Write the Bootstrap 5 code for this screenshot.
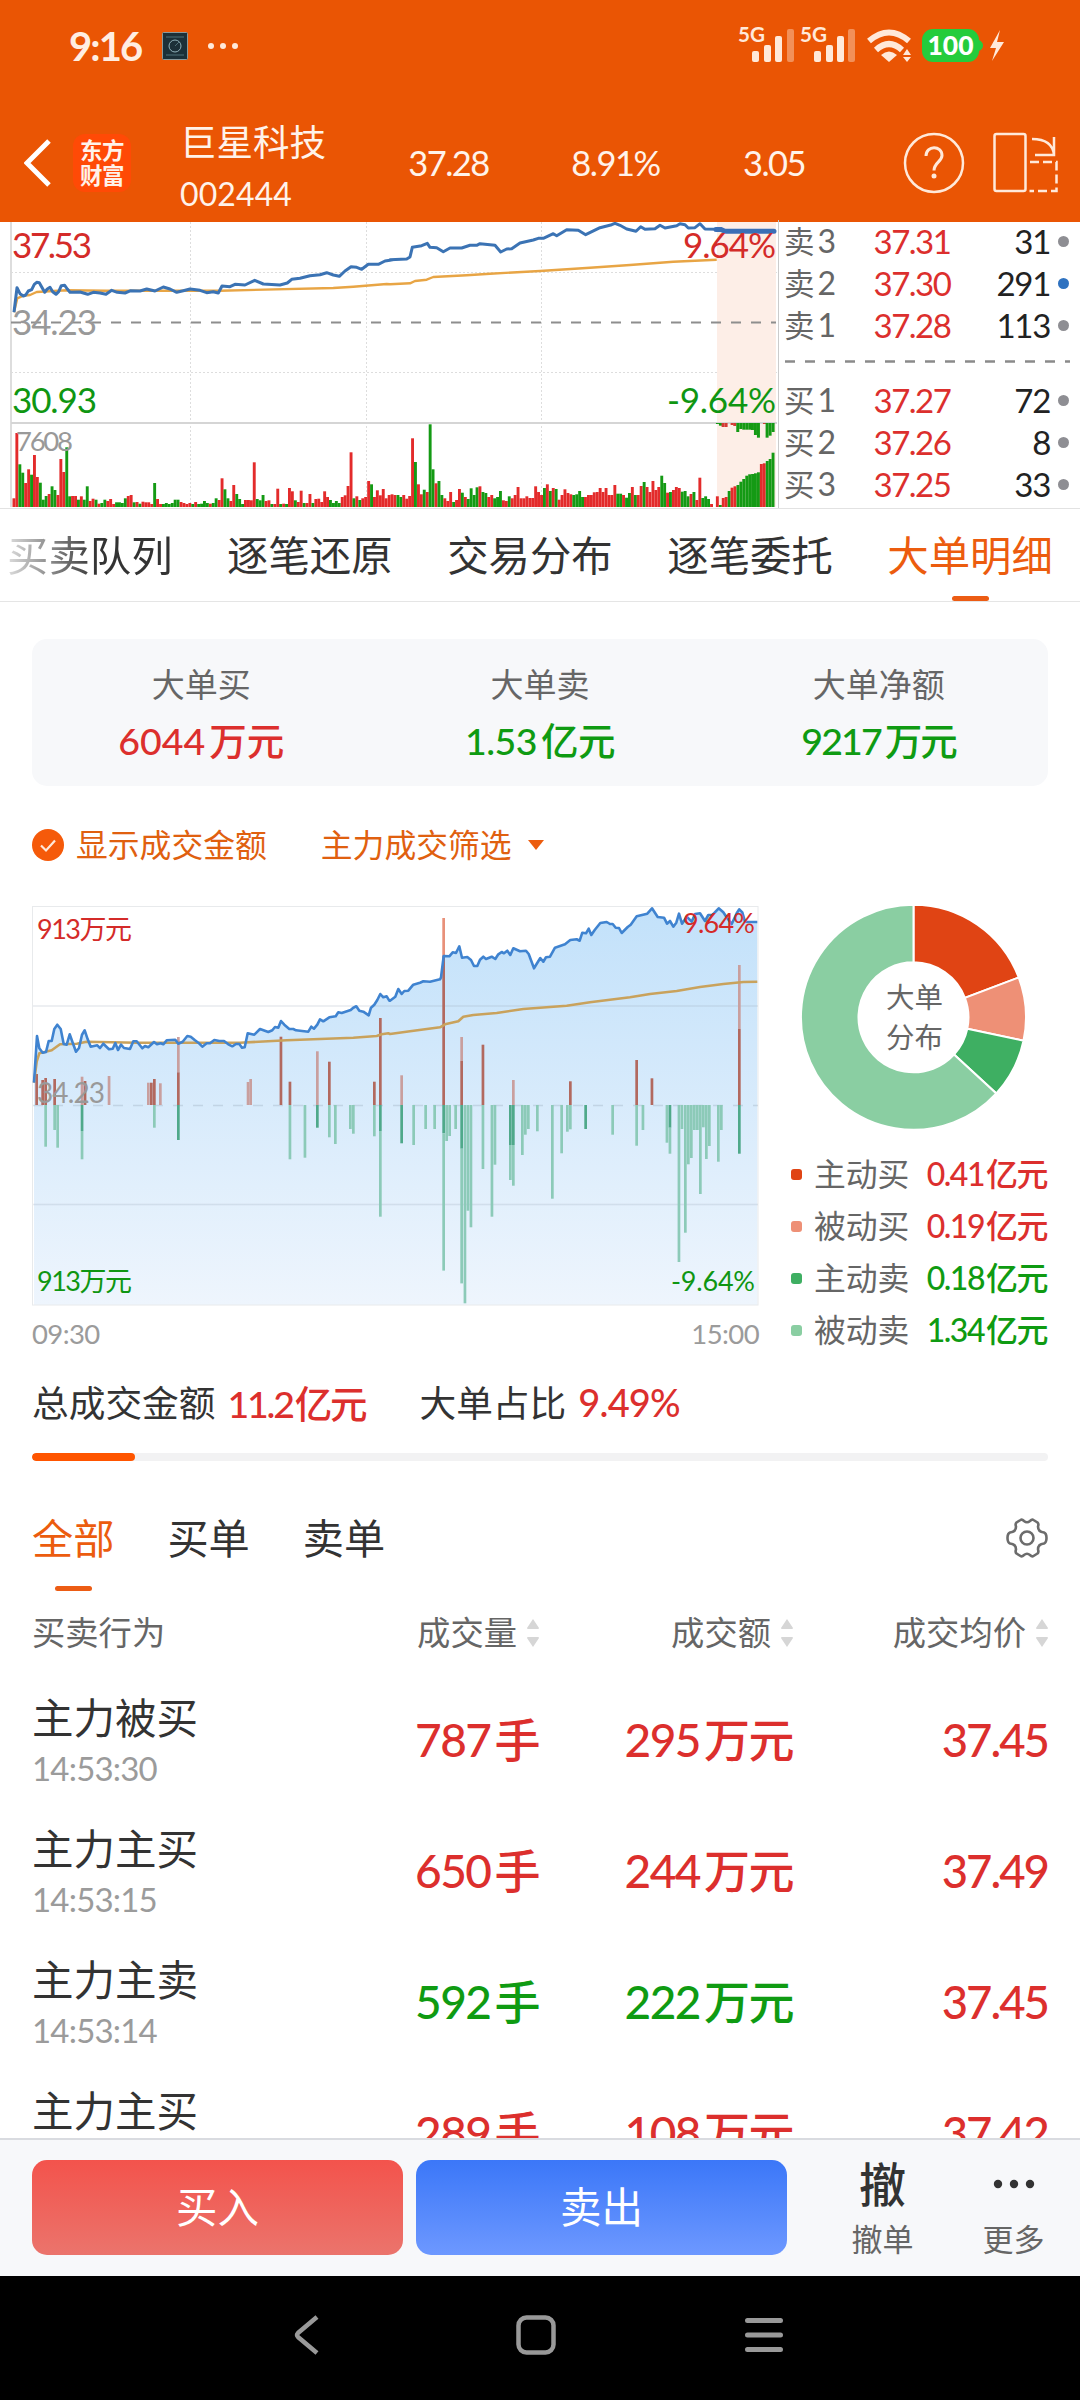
<!DOCTYPE html>
<html lang="zh-CN">
<head>
<meta charset="utf-8">
<meta name="viewport" content="width=device-width, initial-scale=1">
<title>巨星科技 002444</title>
<link href="https://cdn.jsdelivr.net/npm/bootstrap@5.3.0/dist/css/bootstrap.min.css" rel="stylesheet">
<style>
  :root { --brand:#ea5504; --up:#dc2f2d; --down:#0f9b12; --ink:#333; --mid:#666; --soft:#9b9b9b; }
  body { font-family: Lato, "Noto Sans CJK SC", sans-serif; color: var(--ink); background:#fff; line-height:1.2; }
  .phone { width:1080px; height:2400px; overflow:hidden; }
  .up { color:var(--up)!important; } .down { color:var(--down)!important; } .brand { color:#ec5c0e!important; }
  svg { display:block; flex:none; }
  svg text { font-family: Lato, "Noto Sans CJK SC", sans-serif; }

  .head { background:var(--brand); color:#fff3ea; }
  .statusbar { height:92px; padding:0 73px 0 69px; }
  .clock { font-size:40px; font-weight:700; letter-spacing:-1.9px; width:74px; color:#ffeee2; }
  .titlebar { height:130px; padding:12px 21px 0 24px; }
  .logo { width:58px; height:58px; border-radius:12px; background:#ff4a06; font-size:22.5px; line-height:25px; font-weight:700; margin-left:22px; padding-bottom:1px; letter-spacing:-.6px; }
  .stock { margin-left:49px; width:184px; line-height:51px; padding-top:9px; }
  .stock-name { font-size:36.5px; } .stock-code { font-size:32px; letter-spacing:.1px; }
  .quote-cell { width:167px; text-align:center; font-size:34.5px; letter-spacing:-1.5px; padding-left:2px; }

  .quote { height:287px; border-bottom:1px solid #e2e2e2; }
  .book { width:302px; margin-top:-2px; font-size:33px; color:#222; padding:0 11px 0 5px; border-left:1px solid #ccc; }
  .book-row { height:42px; line-height:42px; }
  .book-label { width:66px; color:var(--mid); font-size:30.5px; }
  .book-label b { font-weight:400; font-size:32px; margin-left:3px; }
  .book-price { width:101px; text-align:right; letter-spacing:-1.5px; }
  .book-qty { width:100px; text-align:right; letter-spacing:-1.3px; margin-right:1px; }
  .dot { width:11px; height:11px; border-radius:50%; background:#8e8e93; margin-left:7px; }
  .dot.on { background:#2f72c0; }

  .maintabs { height:93px; padding-left:7px; gap:54.500px; font-size:41.4px; border-bottom:1px solid #e5e5e5; white-space:nowrap; line-height:92px; }
  .fade-start { background:linear-gradient(90deg,#ddd 0,#333 90px); -webkit-background-clip:text; background-clip:text; color:transparent; }
  .bar-under { position:absolute; left:50%; width:37px; height:5px; margin-left:-18px; border-radius:3px; background:#ec5c14; }

  .summary { margin:37px 32px 0; height:147px; border-radius:15px; background:#f7f8fa; padding-top:17px; }
  .sum-label { font-size:33px; color:var(--mid); line-height:57px; }
  .sum-value { font-size:37.5px; font-weight:500; line-height:55px; }
  .unit { font-style:normal; margin-left:4px; }
  .filters { height:118px; padding:0 32px; font-size:31.8px; color:#e0600f; }

  .detail { height:456px; padding-left:32px; }
  .times { width:727px; font-size:27.5px; color:var(--soft); line-height:52px; letter-spacing:-.6px; }
  .donut-box { margin-top:-2px; }
  .legend-row { height:52px; font-size:31.8px; padding-right:33px; padding-left:12px; }
  .legend-key { width:11px; height:11px; border-radius:3px; margin-right:12px; }
  .legend-val { font-size:32px; font-weight:500; letter-spacing:-1.5px; }
  .legend-val .unit { margin-left:2px; }
  .totals { height:86px; padding:0 32px; font-size:36.7px; white-space:nowrap; }
  .totals .val { font-size:38px; font-weight:500; letter-spacing:-.8px; }
  .totals .val.amount { width:136px; font-size:37.5px; letter-spacing:-2.200px; }
  .totals .amount .unit { margin-left:2px; }
  .ratio { width:1016px; height:8px; margin:7px 32px 0; border-radius:4px; background:#f2f2f3; }
  .ratio .progress-bar { background:#ff5500; border-radius:4px; }

  .subtabs { margin-top:39px; height:100px; padding:0 32px; font-size:41.2px; line-height:76px; }
  .subtabs .tabs-in { gap:53px; }
  .cols-head { height:66px; padding:0 32px; color:var(--mid); font-size:33.3px; }
  .c1 { width:290px; } .c2 { width:217px; } .c3 { width:254px; } .c4 { width:255px; }
  .deal { height:131px; padding:0 32px; }
  .deal-name { font-size:41.5px; line-height:54px; } 
  .deal-time { font-size:33px; color:var(--soft); line-height:46px; letter-spacing:-.8px; }
  .deal-val { font-size:46px; font-weight:500; letter-spacing:-1.5px; text-align:right; padding-bottom:1px; }
  .c4.deal-val { font-size:45.5px; letter-spacing:-2px; }

  .actions { height:138px; background:#f7f8fa; border-top:2px solid #d9dbe0; padding:20px 0 0 32px; position:relative; z-index:2; }
  .trade { width:371px; flex:none; height:95px; border-radius:15px; border:0; font-size:41.5px; color:#fff; }
  .trade:hover { color:#fff; }
  .buy { background:linear-gradient(#f3534c,#eb746c); }
  .sell { background:linear-gradient(#3b77f8,#6d98ff); margin-left:13px; }
  .act { width:131px; flex:none; font-size:31px; color:var(--mid); }
  .act-top { height:48px; line-height:48px; font-size:47px; font-weight:500; color:#333; }
  .sysnav { height:124px; background:#000; padding:0 297px 7px 293px; }
</style>
</head>
<body>
<div class="phone d-flex flex-column">
  <header class="head flex-shrink-0">
    <div class="statusbar d-flex align-items-center">
      <span class="clock">9:16</span>
      <svg width="26" height="28" viewBox="0 0 26 28" style="margin-left:19px"><rect x=".5" y=".5" width="25" height="27" rx="1" fill="#1c3038" stroke="#8a9a9c"/><circle cx="13" cy="14" r="6" fill="none" stroke="#8fb0b8"/><path d="M13 14l4-4M4 5h18M4 23h18" stroke="#4f7078"/></svg>
      <svg width="32" height="8" viewBox="0 0 32 8" style="margin-left:19px"><g fill="#ffe9da"><circle cx="4" cy="4" r="3"/><circle cx="16" cy="4" r="3"/><circle cx="28" cy="4" r="3"/></g></svg>
      <svg class="ms-auto" width="288" height="60" viewBox="720 16 288 60">
        <g fill="#ffe9da"><text x="739" y="42" font-size="20" font-weight="700" textLength="27" lengthAdjust="spacingAndGlyphs">5G</text><text x="801" y="42" font-size="20" font-weight="700" textLength="27" lengthAdjust="spacingAndGlyphs">5G</text>
        <rect x="753" y="51" width="7" height="11" rx="2"/><rect x="765" y="45" width="7" height="17" rx="2"/><rect x="776" y="36" width="7" height="26" rx="2"/><rect x="788" y="29" width="7" height="33" rx="2" opacity=".4"/>
        <rect x="815" y="51" width="7" height="11" rx="2"/><rect x="827" y="45" width="7" height="17" rx="2"/><rect x="838" y="36" width="7" height="26" rx="2"/><rect x="849" y="29" width="7" height="33" rx="2" opacity=".4"/>
        <path d="M882 55Q890 48 898 55L890 62z"/><path d="M904 55l4-6 4 6zM904 57h8l-4 5z"/>
        <path d="M1001 30l-10 18h6l-4 13 12-19h-7z"/></g>
        <g fill="none" stroke="#ffe9da" stroke-width="6"><path d="M870 41Q890 24 910 41"/><path d="M877 50Q890 38 903 50"/></g>
        <rect x="923" y="29" width="57" height="33" rx="11" fill="#24cc3c"/><path d="M980 40q4 2 4 5.500t-4 5.500z" fill="#24cc3c"/>
        <text x="951.500" y="55" text-anchor="middle" font-size="27" font-weight="900" fill="#fff" textLength="46" lengthAdjust="spacingAndGlyphs">100</text>
      </svg>
    </div>
    <div class="titlebar d-flex align-items-center">
      <svg width="27" height="48" viewBox="0 0 27 48"><path d="M25 2L3 24l22 22" fill="none" stroke="#fff" stroke-width="5"/></svg>
      <div class="logo d-flex align-items-center justify-content-center text-center"><span>东方<br>财富</span></div>
      <div class="stock"><div class="stock-name">巨星科技</div><div class="stock-code">002444</div></div>
      <div class="quote-cell">37.28</div><div class="quote-cell">8.91%</div><div class="quote-cell" style="width:150px">3.05</div>
      <svg class="ms-auto" width="156" height="62" viewBox="903 132 156 62"><g fill="none" stroke="#ffe9da" stroke-width="2.500"><circle cx="934" cy="163" r="29"/><path d="M926 156c0-11 16-11 16-.500 0 6-8 7-8 15" stroke-width="3"/><rect x="994.500" y="134" width="31" height="57" rx="2"/><path d="M1030 162h26.500v29h-27" stroke-dasharray="9 4"/><path d="M1032 139c14 0 21 6 22 16M1054 137v18h-19" /></g><circle cx="934" cy="176" r="2.500" fill="#ffe9da"/></svg>
    </div>
  </header>

  <section class="quote d-flex flex-shrink-0">
    <svg id="minute" width="778" height="286" viewBox="0 222 778 286"></svg>
    <div class="book">
      <div class="book-row d-flex align-items-center"><span class="book-label">卖<b>3</b></span><span class="book-price up">37.31</span><span class="book-qty">31</span><i class="dot"></i></div>
      <div class="book-row d-flex align-items-center"><span class="book-label">卖<b>2</b></span><span class="book-price up">37.30</span><span class="book-qty">291</span><i class="dot on"></i></div>
      <div class="book-row d-flex align-items-center"><span class="book-label">卖<b>1</b></span><span class="book-price up">37.28</span><span class="book-qty">113</span><i class="dot"></i></div>
      <svg width="286" height="33" viewBox="0 0 286 33"><path d="M1 15.500H286" stroke="#8a8a8a" stroke-width="2.500" stroke-dasharray="10 10"/></svg>
      <div class="book-row d-flex align-items-center"><span class="book-label">买<b>1</b></span><span class="book-price up">37.27</span><span class="book-qty">72</span><i class="dot"></i></div>
      <div class="book-row d-flex align-items-center"><span class="book-label">买<b>2</b></span><span class="book-price up">37.26</span><span class="book-qty">8</span><i class="dot"></i></div>
      <div class="book-row d-flex align-items-center"><span class="book-label">买<b>3</b></span><span class="book-price up">37.25</span><span class="book-qty">33</span><i class="dot"></i></div>
    </div>
  </section>

  <nav class="maintabs d-flex flex-shrink-0">
    <span class="fade-start">买卖队列</span><span>逐笔还原</span><span>交易分布</span><span>逐笔委托</span>
    <span class="brand position-relative">大单明细<i class="bar-under bottom-0"></i></span>
  </nav>

  <main class="flex-grow-1 overflow-hidden">
    <div class="summary d-flex text-center">
      <div class="col-4"><div class="sum-label">大单买</div><div class="sum-value up">6044<i class="unit">万元</i></div></div>
      <div class="col-4"><div class="sum-label">大单卖</div><div class="sum-value down" style="letter-spacing:-.5px">1.53<i class="unit">亿元</i></div></div>
      <div class="col-4"><div class="sum-label">大单净额</div><div class="sum-value down" style="letter-spacing:-1.9px">9217<i class="unit">万元</i></div></div>
    </div>
    <div class="filters d-flex align-items-center">
      <svg width="32" height="32" viewBox="0 0 32 32"><circle cx="16" cy="16" r="16" fill="#f55a0a"/><path d="M9 16.500l5 5 9-10" fill="none" stroke="#ffe9da" stroke-width="2.200"/></svg>
      <span style="margin-left:12px">显示成交金额</span><span style="margin-left:54px">主力成交筛选</span>
      <svg width="16" height="12" viewBox="0 0 16 12" style="margin-left:16px"><path d="M0 1h16L8 11z" fill="#ec5c0e"/></svg>
    </div>

    <div class="detail d-flex">
      <div>
        <svg id="flow" width="727" height="404" viewBox="32 904 727 404"></svg>
        <div class="times d-flex justify-content-between"><span>09:30</span><span>15:00</span></div>
      </div>
      <div class="flex-grow-1 ps-3 ms-1 donut-box">
        <svg width="270" height="246" viewBox="779 902 270 246">
          <g id="donut" stroke="#fff" stroke-width="2"></g>
          <g font-size="28.500" fill="#666" text-anchor="middle"><text x="914.500" y="1007.500">大单</text><text x="914.500" y="1047.500">分布</text></g>
        </svg>
        <div class="legend-row d-flex align-items-center"><i class="legend-key" style="background:#e04414"></i><span style="color:#666">主动买</span><span class="legend-val up ms-auto">0.41<i class="unit">亿元</i></span></div>
        <div class="legend-row d-flex align-items-center"><i class="legend-key" style="background:#ee9076"></i><span style="color:#666">被动买</span><span class="legend-val up ms-auto">0.19<i class="unit">亿元</i></span></div>
        <div class="legend-row d-flex align-items-center"><i class="legend-key" style="background:#3eaf62"></i><span style="color:#666">主动卖</span><span class="legend-val down ms-auto">0.18<i class="unit">亿元</i></span></div>
        <div class="legend-row d-flex align-items-center"><i class="legend-key" style="background:#8acea2"></i><span style="color:#666">被动卖</span><span class="legend-val down ms-auto">1.34<i class="unit">亿元</i></span></div>
      </div>
    </div>

    <div class="totals d-flex align-items-center"><span>总成交金额</span><span class="val up amount" style="margin-left:12px">11.2<i class="unit">亿元</i></span><span style="margin-left:56px">大单占比</span><span class="val up" style="margin-left:12px">9.49%</span></div>
    <div class="progress ratio"><div class="progress-bar" style="width:10.15%"></div></div>

    <div class="subtabs d-flex justify-content-between">
      <div class="tabs-in d-flex"><span class="brand position-relative">全部<i class="bar-under" style="top:86px"></i></span><span>买单</span><span>卖单</span></div>
      <svg width="42" height="40" viewBox="0 0 42 40" style="margin-top:18px"><g fill="none" stroke="#6c6c6c" stroke-width="2.600" stroke-linejoin="round"><path d="M14.500 2Q16 1 18 3Q21 5.500 24 3Q26 1 27.500 2L31.500 4.500Q33 6 32 8.500Q32 14 38 14.500Q40.500 15.500 40.500 20T38 25.500Q32 26 32 31.500Q33 34 31.500 35.500L27.500 38Q26 39 24 37Q21 34.500 18 37Q16 39 14.500 38L10.500 35.500Q9 34 10 31.500Q10 26 4 25.500Q1.500 24.500 1.500 20T4 14.500Q10 14 10 8.500Q9 6 10.500 4.500z"/><circle cx="21" cy="20" r="6.500"/></g></svg>
    </div>

    <div class="cols-head d-flex align-items-center">
      <span class="c1">买卖行为</span>
      <span class="c2 d-flex align-items-center justify-content-end">成交量<svg class="sorter"></svg></span>
      <span class="c3 d-flex align-items-center justify-content-end">成交额<svg class="sorter"></svg></span>
      <span class="c4 d-flex align-items-center justify-content-end">成交均价<svg class="sorter"></svg></span>
    </div>

    <div style="padding-top:9px">
      <div class="deal d-flex align-items-center"><div class="c1"><div class="deal-name">主力被买</div><div class="deal-time">14:53:30</div></div><div class="c2 deal-val up">787<i class="unit">手</i></div><div class="c3 deal-val up">295<i class="unit">万元</i></div><div class="c4 deal-val up">37.45</div></div>
      <div class="deal d-flex align-items-center"><div class="c1"><div class="deal-name">主力主买</div><div class="deal-time">14:53:15</div></div><div class="c2 deal-val up">650<i class="unit">手</i></div><div class="c3 deal-val up">244<i class="unit">万元</i></div><div class="c4 deal-val up">37.49</div></div>
      <div class="deal d-flex align-items-center"><div class="c1"><div class="deal-name">主力主卖</div><div class="deal-time">14:53:14</div></div><div class="c2 deal-val down">592<i class="unit">手</i></div><div class="c3 deal-val down">222<i class="unit">万元</i></div><div class="c4 deal-val up">37.45</div></div>
      <div class="deal d-flex align-items-center"><div class="c1"><div class="deal-name">主力主买</div><div class="deal-time">&nbsp;</div></div><div class="c2 deal-val up">289<i class="unit">手</i></div><div class="c3 deal-val up">108<i class="unit">万元</i></div><div class="c4 deal-val up">37.42</div></div>
    </div>
  </main>

  <footer class="flex-shrink-0">
    <div class="actions d-flex">
      <button class="btn trade buy">买入</button><button class="btn trade sell">卖出</button>
      <div class="act text-center" style="margin-left:30px"><div class="act-top">撤</div><div style="margin-top:13px">撤单</div></div>
      <div class="act text-center"><div class="act-top d-flex align-items-center justify-content-center"><svg width="42" height="10" viewBox="0 0 42 10"><g fill="#333"><circle cx="5" cy="5" r="4.200"/><circle cx="21" cy="5" r="4.200"/><circle cx="37" cy="5" r="4.200"/></g></svg></div><div style="margin-top:13px">更多</div></div>
    </div>
    <div class="sysnav d-flex align-items-center justify-content-between">
      <svg width="28" height="42" viewBox="0 0 28 42"><path d="M24 3L5 19q-2 2 0 4l19 16" fill="none" stroke="#999" stroke-width="4.500"/></svg>
      <svg width="40" height="40" viewBox="0 0 40 40" style="margin-left:5px"><rect x="2.500" y="2.500" width="35" height="35" rx="8" fill="none" stroke="#999" stroke-width="4.500"/></svg>
      <svg width="38" height="36" viewBox="0 0 38 36"><path d="M2.500 3.500h33M2.500 18h33M2.500 32.500h33" stroke="#999" stroke-width="5" stroke-linecap="round"/></svg>
    </div>
  </footer>
</div>

<script src="https://cdn.jsdelivr.net/npm/bootstrap@5.3.0/dist/js/bootstrap.bundle.min.js"></script>
<script>
  // "x,y;x,y" in thirds of a pixel, moved to the chart's origin
  const pts = (s, ox, oy) => s.trim().split(';').map(p => { const [x, y] = p.split(',').map(Number); return (ox + x / 3).toFixed(1) + ',' + (oy + y / 3).toFixed(1); }).join(' ');
  const line = (p, c, w) => `<polyline points="${p}" fill="none" stroke="${c}" stroke-width="${w}" stroke-linejoin="round"/>`;
  const label = (x, y, t, c, size, w, end) => `<text x="${end ? x - w : x}" y="${y}" font-size="${size}" fill="${c}" textLength="${w}">${t}</text>`;
  const RED = '#d42b29', GREEN = '#0f9612', GREY = '#999';

  // minute chart
  const priceA = '42,292;51,218;60,236;70,243;77,240;85,228;95,224;103,208;110,202;118,203;125,216;134,232;142,222;150,217;158,230;168,238;176,230;184,212;194,211;202,222;210,232;240,231;263,238;280,232;300,234;318,238;335,226;352,232;375,234;392,227;420,228;440,222;465,228;490,216;510,222;530,232;550,227;570,222;600,226;620,233;640,230;655,234;666,213;690,215;705,208;735,210;764,196;790,207;840,210;862,204;875,193;900,190;930,182;960,179;980,173;1000,180;1018,184;1035,168;1053,155;1070,157;1085,163;1105,148;1135,148;1155,138;1180,134';
  const priceB = '0,134;50,132;60,126;67,97;95,92;112,85;120,97;140,98;160,110;180,99;215,99;240,91;260,91;270,86;300,89;315,91;332,111;350,102;365,101;390,84;430,75;445,70;460,70;490,56;500,62;530,44;565,46;587,59;630,38;665,29;675,25;690,31;710,42;738,49;752,35;765,43;795,41;810,31;825,39;860,32;870,26;885,29;895,39;915,38;930,26;945,42;985,43';
  const avgA = '42,292;52,250;70,242;90,240;110,231;200,226;320,227;660,227;1000,219;1060,215;1160,207';
  const avgB = '0,208;60,205;75,198;110,194;130,186;230,181;300,176;450,168;600,158;720,150;850,140;980,134';
  const vol = '26r 222r 128g 103g 72r 113r 97g 156r 90r 73g 22g 33g 39r 62g 51g 36r 144r 105r 179g 32g 33r 33r 22g 32r 22g 62g 18r 25r 22g 10r 12g 22g 18r 24r 9r 14g 14g 12g 26g 33r 36r 14g 15r 10g 16r 14r 14r 9r 72g 24r 9r 9g 12g 9g 12g 22g 22g 15r 12r 9r 12r 9g 15r 9g 10g 18g 12g 10r 12g 26g 21r 86r 53g 26g 18r 66r 39g 24g 9g 21r 21r 20r 134r 24g 20g 36g 18r 20r 9g 9r 55r 9g 10r 9g 57r 47r 20g 15r 49r 12g 12r 39r 12g 24r 25r 15r 47r 30r 21g 12g 18g 12g 30r 35r 63r 164r 26g 32r 21g 26r 30r 78r 68g 30r 50r 35r 54r 26r 36r 38r 36r 36g 30g 36r 25r 33r 206r 135g 68r 38r 52g 45r 248g 113g 71r 78g 36g 26r 18r 45r 15g 21r 54r 43g 30r 24g 56g 36g 59g 62r 45g 42g 30r 36r 26g 30g 48g 20r 18r 32g 26r 36r 60r 26r 26r 32r 27r 27r 62r 45r 36r 57g 68r 48g 57r 54g 22r 36r 53r 42r 38r 36g 38g 48g 30g 30r 36r 36r 44r 45r 57r 45r 57r 36r 36r 66r 40g 40g 36r 28g 42g 60r 36g 36r 63r 75g 60r 45r 78r 51r 60r 94g 72g 43r 45g 51r 60r 57r 46g 48g 32g 39r 45g 21r 88r 27g 32g 24g 9r 0r 32r 6g 27r 30r 48g 58r 62r 66g 76g 84g 94g 98g 99g 101g 104g 129r 131r 138g 144g 163g'.split(' ');
  let m = '<path d="M11 272.500H777M11 372.500H777M190.500 222V507M366.500 222V507M541.500 222V507" stroke="#ddd" stroke-dasharray="2 2"/><rect x="717" y="222" width="59" height="285" fill="#fdeee7"/><path d="M11 222V507" stroke="#ddd" stroke-width="2"/><path d="M11 423H777" stroke="#d5d5d5" stroke-width="2"/><path d="M11 322.500H776" stroke="#8e8e8e" stroke-width="2" stroke-dasharray="10 10"/>';
  vol.forEach((v, i) => { const h = parseFloat(v) / 3, x = 12.5 + i * 2.931; m += `<rect x="${x.toFixed(1)}" y="${(507 - h).toFixed(1)}" width="2.900" height="${h.toFixed(1)}" fill="${v.endsWith('r') ? '#e32b2b' : '#149a14'}"/>`; });
  '982:3g 991:8g 999:12r 1008:12r 1026:6r 1034:9r 1043:27g 1052:18g 1061:20g 1070:20g 1079:20g 1087:21g 1096:36g 1105:44g 1123:3r 1131:44g 1140:38g 1149:27g'.split(' ').forEach(v => { const [x, h] = v.split(':'); m += `<rect x="${390 + x / 3 - 1.4}" y="423" width="3" height="${parseFloat(h) / 3}" fill="${h.endsWith('r') ? '#d43a35' : '#149a14'}"/>`; });
  m += line(pts(avgA, 0, 215) + ' ' + pts(avgB, 390, 215), '#e8a545', 2.4);
  m += line(pts(priceA, 0, 215) + ' ' + pts(priceB, 390, 215), '#3b73b4', 3);
  m += '<path d="M716 229.500h5l4 1.800h49" fill="none" stroke="#3b6fb6" stroke-width="5" stroke-linecap="round"/>';
  m += label(12, 258, '37.53', RED, 35, 80) + label(12, 335, '34.23', GREY, 35, 85) + label(12, 413, '30.93', GREEN, 35, 85) + label(776, 258, '9.64%', RED, 35, 93, 1) + label(776, 413, '-9.64%', GREEN, 35, 109, 1) + label(16, 451, '7608', GREY, 27.5, 57);
  document.getElementById('minute').innerHTML = m;

  // big-order flow chart
  const flowA = '42,578;51,438;58,475;68,488;78,486;86,453;95,453;103,417;112,404;122,417;131,462;140,464;149,433;158,458;168,485;177,474;186,434;194,421;203,448;212,470;232,466;240,474;250,461;267,478;278,476;286,459;294,480;303,464;312,474;330,477;340,454;350,454;367,475;375,468;385,472;402,456;411,463;422,460;430,463;440,451;466,449;475,461;488,455;502,438;512,440;525,451;535,458;547,470;560,460;570,460;583,450;598,453;612,453;625,463;637,469;648,462;658,462;666,473;674,472;683,430;703,434;720,417;745,426;757,421;765,411;775,413;783,393;793,404;808,417;820,417;828,421;865,425;874,410;882,416;892,404;900,388;910,394;928,382;947,379;955,367;965,369;992,360;1000,353;1009,349;1018,362;1030,365;1046,376;1053,353;1063,344;1072,330;1081,312;1090,322;1100,319;1108,332';
  const flowB = '0,332;16,320;25,297;35,312;43,303;55,302;70,284;90,278;100,274;120,275;150,268;153,262;161,198;178,199;188,187;198,189;208,169;216,203;232,201;243,210;252,228;262,228;270,209;280,200;288,207;305,200;316,207;325,193;335,186;342,190;352,182;361,195;370,175;390,184;408,182;416,192;432,235;451,204;460,215;468,202;480,200;495,173;525,163;541,150;560,148;569,152;577,128;588,130;596,116;604,135;614,120;631,99;650,96;660,102;668,102;677,113;687,114;695,129;713,111;722,104;740,79;772,71;786,55;803,81;822,83;831,101;840,93;850,110;859,98;867,71;876,101;890,80;905,95;915,72;930,70;945,93;955,75;968,74;986,55;1000,67;1012,85;1025,102;1040,70;1048,58;1057,67;1065,95;1102,96';
  const fAvgA = '42,578;50,515;58,490;95,481;120,463;170,461;200,455;350,458;660,458;800,451;1000,443;1070,438;1085,433;1105,430';
  const fAvgB = '0,432;60,424;150,412;165,403;205,394;220,380;250,375;320,369;400,357;530,347;600,337;720,322;780,312;860,303;930,291;1000,282;1060,276;1102,275';
  const fl = pts(flowA, 20, 890) + ' ' + pts(flowB, 390, 890);
  let f = '<defs><linearGradient id="sky" x1="0" y1="906" x2="0" y2="1305" gradientUnits="userSpaceOnUse"><stop offset="0" stop-color="#c2e1fa"/><stop offset="1" stop-color="#eef5fd"/></linearGradient></defs>';
  f += `<polygon points="${fl} 757.500,1305 34,1305" fill="url(#sky)"/>`;
  f += '<rect x="32.500" y="906.500" width="725.500" height="398.500" fill="none" stroke="#e8eaec"/><path d="M33 1006H758M33 1204.500H758" stroke="#90a0b0" stroke-opacity=".22" stroke-width="1.500"/><path d="M33 1105.500H758" stroke="#90a0b0" stroke-opacity=".3" stroke-width="1.500" stroke-dasharray="10 10"/>';
  const C = { D: '#b2695f', L: '#c99f9e', O: '#e8917a', G: '#4fa98a', K: '#8ccab8' };
  const bars = (s, ox) => s.split(' ').forEach(b => { const [x, k, a, e] = b.split(':'); const y1 = 890 + Math.min(a, e) / 3, y2 = 890 + Math.max(a, e) / 3; f += `<rect x="${(ox + x / 3 - 1.35).toFixed(1)}" y="${y1.toFixed(1)}" width="2.700" height="${(y2 - y1).toFixed(1)}" fill="${C[k]}"/>`; });
  bars('50:D:552:645 68:D:570:645 77:D:564:645 104:D:567:645 186:L:560:645 195:D:573:645 267:L:558:645 385:L:578:645 394:D:578:645 403:D:567:645 421:L:580:645 475:L:441:547 475:D:547:645 684:L:576:645 692:L:567:645 783:D:440:645 810:D:575:645 892:L:484:645 928:D:515:645 1063:D:575:645 1081:D:384:645 77:K:645:770 104:K:645:720 113:K:645:773 186:G:645:723 186:K:723:808 403:K:645:713 475:G:645:750 810:K:645:808 855:K:645:803 892:G:645:713 928:K:645:742 946:K:645:762 991:K:645:717 1000:K:645:731 1063:K:645:739 1081:G:645:723 1081:K:723:980', 20);
  bars('35:L:556:645 161:O:84:198 161:D:198:645 215:L:441:513 215:D:513:645 279:D:464:645 370:L:570:645 541:D:574:645 740:D:510:645 786:D:565:645 1048:L:225:417 1048:D:417:645 35:G:645:760 71:K:645:765 107:K:645:717 134:K:645:717 161:G:645:730 161:K:730:1142 170:K:645:753 179:K:645:738 197:K:645:717 215:G:645:776 215:K:776:1180 225:K:645:1240 234:K:645:962 243:K:645:1012 279:K:645:837 306:K:645:980 315:K:645:824 361:G:645:765 361:K:765:870 370:G:645:765 370:K:765:887 397:K:645:795 406:K:645:734 415:K:645:717 442:K:645:724 487:K:645:926 515:K:645:790 532:K:645:725 541:K:645:718 587:G:645:717 668:K:645:734 740:K:645:767 759:K:645:720 831:K:645:758 840:G:645:713 840:K:713:791 867:K:645:1116 876:K:645:717 886:K:645:1028 895:K:645:823 904:K:645:804 913:K:645:720 922:K:645:720 931:K:645:912 940:K:645:712 949:K:645:807 958:K:645:768 985:K:645:815 994:K:645:720 1048:G:645:791', 390);
  f += line(pts(fAvgA, 20, 890) + ' ' + pts(fAvgB, 390, 890), '#c9a25c', 2.6) + line(fl, '#3f83d0', 2.6);
  f += label(37, 939, '913万元', RED, 27, 95) + label(37, 1103, '34.23', GREY, 28, 68) + label(37, 1291, '913万元', GREEN, 27, 95) + label(755, 933, '9.64%', RED, 27, 72, 1) + label(755, 1291, '-9.64%', GREEN, 27, 84, 1);
  document.getElementById('flow').innerHTML = f;

  // donut
  const at = (r, d) => { const a = d * Math.PI / 180; return (913.5 + r * Math.sin(a)).toFixed(1) + ' ' + (1017.3 - r * Math.cos(a)).toFixed(1); };
  document.getElementById('donut').innerHTML = [[0, 69.3, '#e04414'], [69.3, 102, '#ee9076'], [102, 132.6, '#3eaf62'], [132.6, 360, '#8acea2']].map(([a, b, c]) => { const big = b - a > 180 ? 1 : 0; return `<path fill="${c}" d="M${at(112.5, a)}A112.500 112.500 0 ${big} 1 ${at(112.5, b)}L${at(55, b)}A55 55 0 ${big} 0 ${at(55, a)}z"/>`; }).join('');

  // sort arrows
  document.querySelectorAll('.sorter').forEach(s => { s.setAttribute('width', 12); s.setAttribute('height', 30); s.style.marginLeft = '10px'; s.innerHTML = '<path d="M6 1l6 9q0 1-1 1H1q-1 0-1-1zM6 29l6-9q0-1-1-1H1q-1 0-1 1z" fill="#d6d6d6"/>'; });
</script>
</body>
</html>
